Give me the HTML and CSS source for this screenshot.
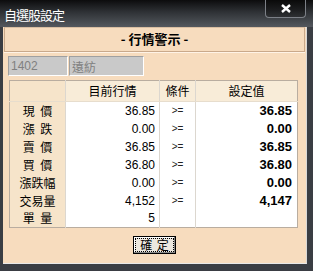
FILE: index.html
```html
<!DOCTYPE html>
<html lang="zh-Hant">
<head>
    <meta charset="UTF-8">
    <title>自選股設定</title>
    <link rel="stylesheet" href="styles.css">
</head>
<body>
    <div class="window">
        <div class="titlebar">
            <span class="title">自選股設定</span>
            <button class="close-btn" type="button">
                <svg width="12" height="9" viewBox="0 0 12 9"><path d="M2 1 L10 8 M10 1 L2 8" stroke="#fff" stroke-width="2.4"/></svg>
            </button>
        </div>
        <div class="client">
            <div class="banner">- 行情警示 -</div>
            <div class="stock-row">
                <input class="stock-inp code" type="text" value="1402" disabled>
                <input class="stock-inp name" type="text" value="遠紡" disabled>
            </div>
            <table class="alert-table">
                <tr class="head">
                    <th class="label"></th>
                    <th>目前行情</th>
                    <th>條件</th>
                    <th>設定值</th>
                </tr>
                <tr>
                    <td class="label">現&nbsp;價</td>
                    <td class="now">36.85</td>
                    <td class="cond">&gt;=</td>
                    <td class="set">36.85</td>
                </tr>
                <tr>
                    <td class="label">漲&nbsp;跌</td>
                    <td class="now">0.00</td>
                    <td class="cond">&gt;=</td>
                    <td class="set">0.00</td>
                </tr>
                <tr>
                    <td class="label">賣&nbsp;價</td>
                    <td class="now">36.85</td>
                    <td class="cond">&gt;=</td>
                    <td class="set">36.85</td>
                </tr>
                <tr>
                    <td class="label">買&nbsp;價</td>
                    <td class="now">36.80</td>
                    <td class="cond">&gt;=</td>
                    <td class="set">36.80</td>
                </tr>
                <tr>
                    <td class="label">漲跌幅</td>
                    <td class="now">0.00</td>
                    <td class="cond">&gt;=</td>
                    <td class="set">0.00</td>
                </tr>
                <tr>
                    <td class="label">交易量</td>
                    <td class="now">4,152</td>
                    <td class="cond">&gt;=</td>
                    <td class="set">4,147</td>
                </tr>
                <tr>
                    <td class="label">單&nbsp;量</td>
                    <td class="now">5</td>
                    <td class="cond"></td>
                    <td class="set"></td>
                </tr>
            </table>
            <div class="actions">
                <button class="ok-btn" type="button"><span>確&nbsp;定</span></button>
            </div>
        </div>
    </div>
</body>
</html>
```

FILE: styles.css
```css
* {
    padding: 0;
    margin: 0;
    box-sizing: border-box;
}
body {
    background: #2b2e33;
    font-family: "Liberation Sans", "Noto Sans CJK TC", sans-serif;
    font-size: 12px;
    color: #000;
}
.window {
    width: 313px;
    height: 271px;
    background: #3a3d43;
    display: flex;
    flex-direction: column;
}
.titlebar {
    height: 27px;
    display: flex;
    justify-content: space-between;
    align-items: flex-start;
    background: linear-gradient(#0c0c0d, #2f3236 45%, #54585e);
    padding: 0 7px 0 4px;
}
.title {
    color: #fff;
    font-family: "Noto Sans CJK TC", sans-serif;
    font-size: 13px;
    line-height: 13px;
    margin-top: 8px;
    letter-spacing: -1px;
}
.close-btn {
    width: 41px;
    height: 18px;
    border: 1px solid #7c8087;
    border-top: none;
    border-radius: 0 0 4px 4px;
    background: linear-gradient(#0a0a0a, #1d1e20 60%, #2e3033);
    display: flex;
    justify-content: center;
    align-items: center;
}
.client {
    width: 304px;
    height: 237px;
    margin-left: 3px;
    background: #f7dcbe;
    border-right: 1px solid #d8d8d8;
    border-bottom: 1px solid #e8e8e8;
    display: flex;
    flex-direction: column;
}
.banner {
    height: 25px;
    margin: 0 1px 0 1px;
    border: 1px solid #c9a98b;
    border-top-color: #d9bea2;
    box-shadow: 0 1px 0 #fff3e6;
    font-family: "Noto Sans CJK TC", sans-serif;
    font-weight: 700;
    font-size: 13px;
    line-height: 22px;
    text-align: center;
}
.stock-row {
    display: flex;
    gap: 1px;
    margin: 4px 0 0 5px;
}
.stock-inp {
    height: 20px;
    background: #c9c9c9;
    border: 1px solid #fff;
    border-top-color: #a0a0a0;
    border-left-color: #a0a0a0;
    color: #808080;
    font-family: "Liberation Sans", "Noto Sans CJK TC", sans-serif;
    font-size: 12px;
    padding-left: 2px;
}
.stock-inp.code {
    width: 60px;
}
.stock-inp.name {
    width: 75px;
}
.alert-table {
    margin: 4px 0 0 6px;
    width: 289px;
    border-collapse: collapse;
    border: 1px solid #b9ada0;
    background: #fff;
}
.alert-table tr {
    height: 18px;
}
.alert-table tr.head {
    height: 21px;
}
.alert-table th,
.alert-table td {
    padding: 0;
    line-height: 16px;
    border-left: 1px solid #dcd7cf;
}
.alert-table .head th {
    background: #f8ecd8;
    font-family: "Noto Sans CJK TC", sans-serif;
    font-weight: 400;
    font-size: 12px;
    text-align: center;
    border-bottom: 1px solid #e7ddcd;
}
.alert-table .label,
.alert-table .head .label {
    width: 56px;
    background: #f6e4ca;
    border-left: none;
    font-family: "Noto Sans CJK TC", sans-serif;
    font-size: 12px;
    text-align: center;
    word-spacing: 3px;
}
.alert-table .now {
    width: 94px;
    text-align: right;
    padding-right: 4px;
}
.alert-table .cond {
    width: 36px;
    text-align: center;
    font-size: 10px;
    color: #222;
}
.alert-table .set {
    text-align: right;
    padding-right: 5px;
    font-weight: 700;
    font-size: 13px;
}
.actions {
    display: flex;
    justify-content: center;
    margin-top: 8px;
}
.ok-btn {
    width: 43px;
    height: 18px;
    background: #ece8e0;
    border: 1px solid #000;
    box-shadow: inset -1px -1px 0 #888, inset 1px 1px 0 #fff;
    font-family: "Noto Sans CJK TC", sans-serif;
    font-size: 12px;
    padding: 2px;
}
.ok-btn span {
    display: block;
    height: 12px;
    line-height: 12px;
    outline: 1px dotted #000;
    word-spacing: 2px;
}
```
